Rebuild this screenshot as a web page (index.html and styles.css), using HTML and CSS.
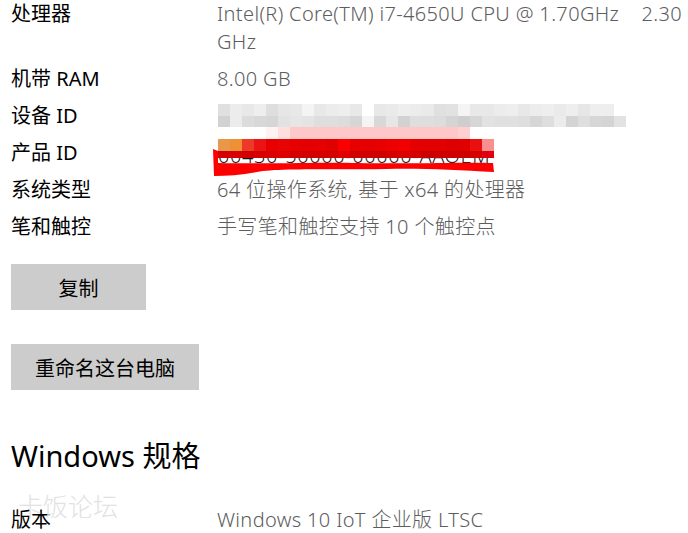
FILE: index.html
```html
<!DOCTYPE html>
<html>
<head>
  <title>关于</title>
<meta name="viewport" content="width=device-width, initial-scale=1">
<link rel="stylesheet" href="styles.css">
</head>
<body>
<div class="page">
  <div class="specs">
    <div class="row">
      <div class="label">处理器</div>
      <div class="value">Intel(R) Core(TM) i7-4650U CPU @ 1.70GHz&nbsp;&nbsp;&nbsp; 2.30 GHz</div>
    </div>
    <div class="row">
      <div class="label">机带 RAM</div>
      <div class="value">8.00 GB</div>
    </div>
    <div class="row">
      <div class="label">设备 ID</div>
      <div class="value">
        <svg class="mosaic" width="420" height="28" viewBox="0 0 420 28" shape-rendering="crispEdges">
          <g id="device-id"></g>
        </svg>
      </div>
    </div>
    <div class="row">
      <div class="label">产品 ID</div>
      <div class="value">
        <svg class="mosaic" width="300" height="28" viewBox="0 0 300 28">
          <text x="1" y="24" class="hidden-id">00430-50000-00000-AAOEM</text>
          <g id="product-id" shape-rendering="crispEdges"></g>
          <path class="scribble" d="M-4 10 L 1 12 L 1 24 C 60 25, 110 23, 140 24 C 200 25, 250 23, 276 24 L 277 33 C 240 31, 200 29, 170 30 C 120 31, 60 29, 40 33 C 25 36, 10 37, -3 37 Z"/>
        </svg>
      </div>
    </div>
    <div class="row">
      <div class="label">系统类型</div>
      <div class="value">64 位操作系统, 基于 x64 的处理器</div>
    </div>
    <div class="row">
      <div class="label">笔和触控</div>
      <div class="value">手写笔和触控支持 10 个触控点</div>
    </div>
  </div>

  <div class="actions">
    <button class="btn">复制</button>
    <button class="btn">重命名这台电脑</button>
  </div>

  <h2 class="section-title">Windows 规格</h2>

  <div class="specs">
    <div class="row">
      <div class="label">版本</div>
      <div class="value">Windows 10 IoT 企业版 LTSC</div>
    </div>
  </div>

  <div class="watermark">卡饭论坛</div>
</div>

<script>
  // pixelated blur blocks over the IDs
  const ns = 'http://www.w3.org/2000/svg';
  function block(g, x, y, w, h, fill) {
    const r = document.createElementNS(ns, 'rect');
    r.setAttribute('x', x); r.setAttribute('y', y);
    r.setAttribute('width', w); r.setAttribute('height', h);
    r.setAttribute('fill', fill);
    g.appendChild(r);
  }

  const top1 = [224,236,232,238,222,230,232,244,232,236,238,232,255,232,234,238,236,234,224,226,244,232,232,236,238,232,236,238,234,238,230,238,238,255];
  const top2 = [210,236,220,216,214,226,230,228,222,222,220,214,244,216,230,210,222,222,220,212,206,214,226,224,224,222,214,222,236,212,222,214,212,226];
  const dev = document.getElementById('device-id');
  top1.forEach((v, i) => block(dev, 1 + i * 12, 2, 12, 12, `rgb(${v},${v},${v})`));
  top2.forEach((v, i) => block(dev, 1 + i * 12, 14, 12, 11, `rgb(${v},${v},${v})`));
  // pink strip between the two rows
  block(dev, 49, 25, 12, 12, '#fff2f2');
  block(dev, 61, 25, 12, 12, '#ffdede');
  block(dev, 73, 25, 168, 12, '#ffc8c8');
  block(dev, 241, 25, 12, 12, '#ffd0d0');

  const prod = document.getElementById('product-id');
  const row1 = ['#e89848','#ee9034','#ee3828','#ea1414','#e80000','#e80404','#e60000','#e40000','#e60000','#e00000','#fa0000','#e60000','#e40000','#e80000','#ec0000','#f20000','#e40000','#e20000','#e20000','#dc0000','#e00000','#ea1010','#f89090'];
  const row2 = ['#d40000','#d80000','#d00000','#d40000','#d80000','#de0000','#d20000','#d00000','#d40000','#d40000','#e00000','#d00000','#d00000','#cc0000','#d40000','#d80000','#d40000','#c80000','#cc0000','#d00000','#cc0000','#d40000','#e00010'];
  row1.forEach((c, i) => block(prod, 1 + i * 12, 0, 12, 12, c));
  row2.forEach((c, i) => block(prod, 1 + i * 12, 12, 12, 7, c));
</script>
</body>
</html>
```

FILE: styles.css
```css
body {
  margin: 0;
  background: white;
  font-family: "Segoe UI", "Noto Sans", "Noto Sans CJK SC", sans-serif;
  color: black;
}

.page {
  position: relative;
  padding: 0 0 0 11px;
  height: 533px;
  overflow: hidden;
}

.specs {
  display: flex;
  flex-direction: column;
  gap: 9px;
}

.row {
  display: grid;
  grid-template-columns: 206px 1fr;
  font-size: 20px;
  line-height: 28px;
}

.label {
  color: #000;
}

.value {
  color: #5d5d5d;
  font-weight: 300;
  letter-spacing: 0.35px;
}

.mosaic {
  display: block;
  overflow: visible;
}

.hidden-id {
  font-family: "Noto Sans", sans-serif;
  font-size: 20px;
  fill: #1a1a1a;
  letter-spacing: 0.6px;
}

.scribble {
  fill: #ff0000;
}

.actions {
  display: flex;
  flex-direction: column;
  align-items: flex-start;
  gap: 34px;
  margin-top: 23px;
}

.btn {
  min-width: 135px;
  height: 46px;
  padding: 0 24px;
  border: none;
  background-color: #cccccc;
  font-family: "Noto Sans CJK SC", sans-serif;
  font-size: 20px;
  color: #000;
}

.section-title {
  margin: 46px 0 30px;
  font-size: 29px;
  line-height: 40px;
  font-weight: 400;
}

.watermark {
  position: absolute;
  left: 18px;
  top: 487px;
  font-family: "Noto Sans CJK SC", sans-serif;
  font-size: 25px;
  color: #e2e2e2;
  font-weight: 300;
}
```
